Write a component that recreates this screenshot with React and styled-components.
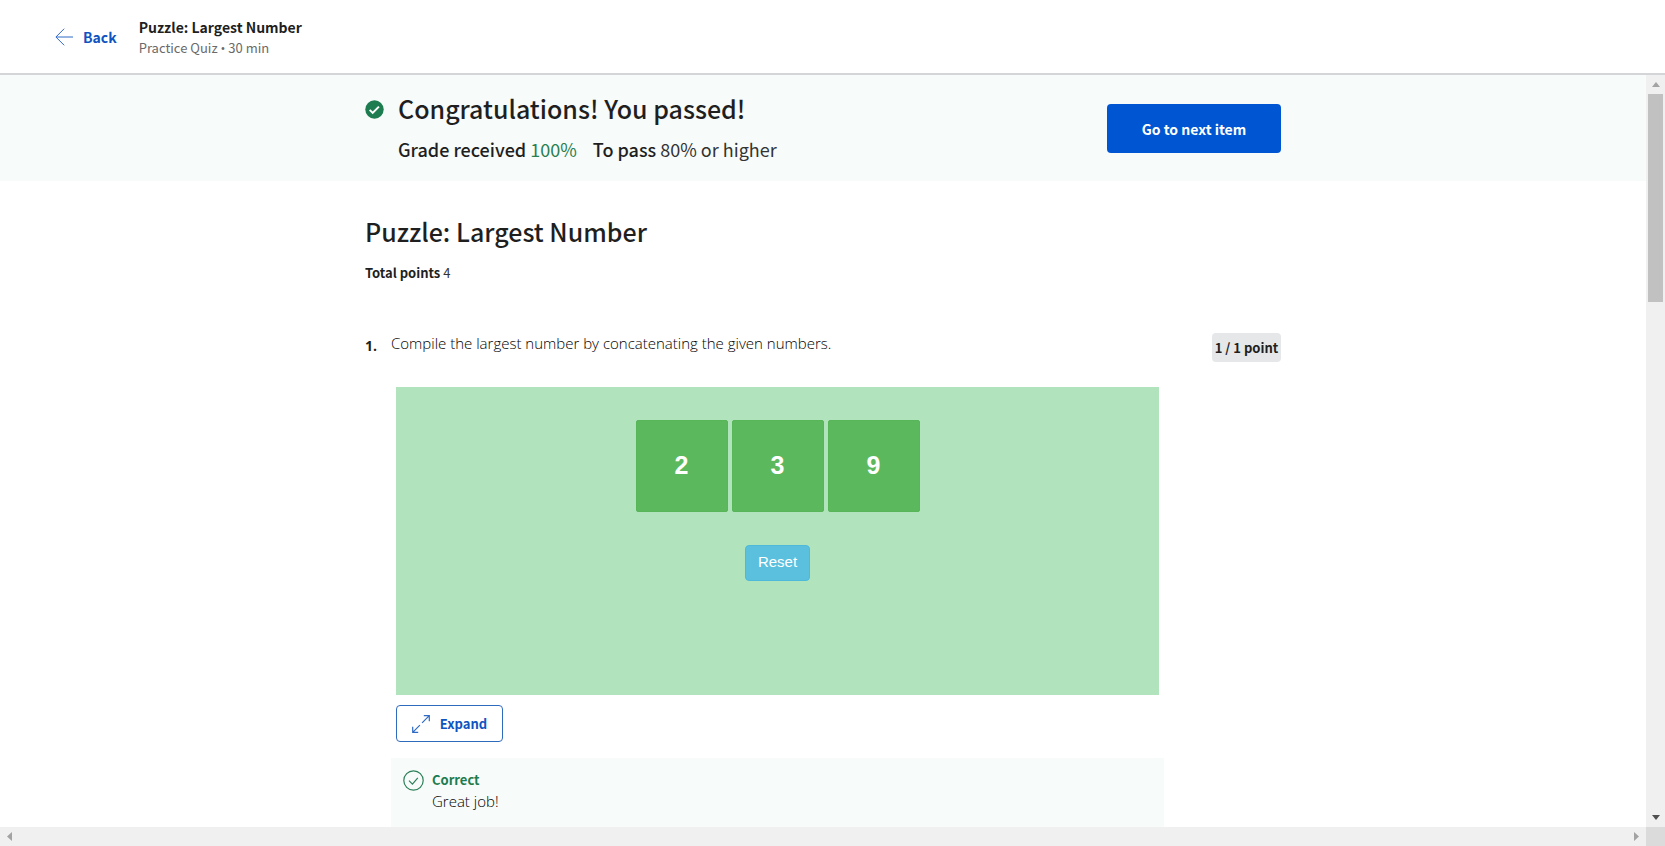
import React from "react";
import styled, { createGlobalStyle } from "styled-components";

const GlobalStyle = createGlobalStyle`
  *, *::before, *::after { box-sizing: border-box; }
  body { margin: 0; background: #fff; color: #1f1f1f; font-family: "Source Sans Pro", "Noto Sans CJK SC", sans-serif; }
  h1, h2, p { margin: 0; }
  button { font-family: inherit; cursor: pointer; }
`;

const Page = styled.div`
  display: grid;
  grid-template-rows: auto minmax(0, 1fr) 19px;
  height: 100vh;
`;

const Header = styled.header`
  display: flex;
  align-items: center;
  gap: 22px;
  height: 75px;
  padding: 0 55px;
  border-bottom: 2px solid #d3d5d6;
`;

const BackLink = styled.a`
  display: flex;
  align-items: center;
  gap: 10px;
  color: #0f54c0;
  font-size: 14px;
  font-weight: 700;
  line-height: 20px;
  text-decoration: none;
`;

const HeaderTitle = styled.p`
  font-size: 14px;
  font-weight: 700;
  line-height: 22px;
`;

const HeaderMeta = styled.p`
  color: #6a6a6a;
  font-size: 13px;
  line-height: 20px;
`;

const Bullet = styled.span`
  font-family: "Open Sans", sans-serif;
`;

const Body = styled.div`
  display: grid;
  grid-template-columns: minmax(0, 1fr) 19px;
  min-height: 0;
`;

const Scroller = styled.main`
  overflow: hidden;
`;

const Banner = styled.section`
  background: #f7fbfa;
`;

const Container = styled.div`
  width: 100%;
  max-width: 916px;
  margin: 0 auto;
`;

const BannerRow = styled(Container)`
  display: flex;
  align-items: flex-start;
  gap: 14px;
  padding: 13px 0 17px;
`;

const BannerIcon = styled.span`
  display: flex;
  padding-top: 12px;
`;

const BannerText = styled.div`
  flex: 1;
`;

const BigTitle = styled.h1`
  font-size: 25px;
  font-weight: 500;
  line-height: 40px;
`;

const GradeLine = styled.p`
  display: flex;
  gap: 16px;
  padding-top: 6px;
  font-size: 18px;
  line-height: 30px;
  color: #333;

  b { font-weight: 500; color: #1f1f1f; }
  em { font-style: normal; color: #2a7f4f; }
`;

const PrimaryButton = styled.button`
  height: 49px;
  width: 174px;
  margin-top: 16px;
  border: 0;
  border-radius: 4px;
  background: #0056d2;
  color: #fff;
  font-size: 14px;
  font-weight: 700;
  line-height: 20px;
`;

const QuizTop = styled.div`
  padding: 30px 0 49px;
`;

const TotalPoints = styled.p`
  padding-top: 11px;
  font-size: 13px;
  line-height: 22px;
  color: #333;

  b { font-weight: 700; color: #1f1f1f; }
`;

const Question = styled.div`
  display: grid;
  grid-template-columns: 26px minmax(0, 1fr) 69px;
`;

const QuestionNumber = styled.span`
  padding-top: 3px;
  font-family: "Open Sans", sans-serif;
  font-size: 14px;
  font-weight: 700;
  line-height: 20px;
`;

const Content = styled.div`
  padding-right: 48px;
`;

const Prompt = styled.p`
  font-family: "Open Sans", sans-serif;
  font-size: 15px;
  font-weight: 300;
  line-height: 20px;
  color: #000;
`;

const Badge = styled.span`
  height: 29px;
  border-radius: 4px;
  background: #e5e7e8;
  font-size: 13px;
  font-weight: 700;
  line-height: 29px;
  text-align: center;
`;

const Indent = styled.div`
  padding: 34px 5px 16px;
`;

const Board = styled.div`
  display: flex;
  flex-direction: column;
  align-items: center;
  gap: 33px;
  height: 308px;
  padding-top: 33px;
  background: #b1e4bd;
`;

const Tiles = styled.div`
  display: flex;
  gap: 4px;
`;

const Tile = styled.button`
  width: 92px;
  height: 92px;
  padding: 0 0 2px;
  border: 1px solid #58b558;
  border-radius: 2px;
  background: #5cb85c;
  color: #fff;
  font-family: "Liberation Sans", Arial, sans-serif;
  font-size: 25px;
  font-weight: 700;
`;

const ResetButton = styled.button`
  width: 65px;
  height: 36px;
  padding: 0 0 4px;
  border: 1px solid #4fb9d9;
  border-radius: 4px;
  background: #5bc0de;
  color: #fff;
  font-family: "Liberation Sans", Arial, sans-serif;
  font-size: 15px;
`;

const ExpandButton = styled.button`
  display: flex;
  align-items: center;
  justify-content: center;
  gap: 10px;
  width: 107px;
  height: 37px;
  margin-top: 10px;
  padding: 0;
  border: 1px solid #2f6bbd;
  border-radius: 4px;
  background: #fff;
  color: #0f54c0;
  font-size: 13px;
  font-weight: 700;
  line-height: 20px;
`;

const Feedback = styled.div`
  display: flex;
  gap: 8px;
  min-height: 90px;
  padding: 12px;
  background: #f7fbfa;
`;

const FeedbackTitle = styled.p`
  color: #1d7c50;
  font-size: 13px;
  font-weight: 700;
  line-height: 20px;
`;

const FeedbackText = styled.p`
  font-family: "Open Sans", sans-serif;
  font-size: 15px;
  font-weight: 300;
  line-height: 22px;
  color: #000;
`;

const VerticalTrack = styled.div`
  display: flex;
  flex-direction: column;
  align-items: center;
  background: #f0f0f0;
`;

const ArrowBox = styled.span`
  display: flex;
  align-items: center;
  justify-content: center;
  width: 19px;
  height: 19px;
`;

const VerticalThumb = styled.div`
  flex: none;
  width: 15px;
  height: 208px;
  margin-bottom: auto;
  background: #c1c1c1;
`;

const HorizontalBar = styled.div`
  display: flex;
  background: #f0f0f0;
`;

const Spacer = styled.span`
  flex: 1;
`;

const Corner = styled.span`
  width: 19px;
  background: #dbdbdb;
`;

const arrowPaths = {
  up: "M0 5 4 0 8 5Z",
  down: "M0 0 8 0 4 5Z",
  left: "M5 0 5 9 0 4.5Z",
  right: "M0 0 0 9 5 4.5Z",
};

function ScrollArrow({ dir, color = "#a3a3a3" }) {
  return (
    <ArrowBox>
      <svg width="8" height="9" viewBox={dir === "up" || dir === "down" ? "0 -2 8 9" : "-1 0 8 9"} fill={color} aria-hidden="true">
        <path d={arrowPaths[dir]} />
      </svg>
    </ArrowBox>
  );
}

export default function App() {
  return (
    <Page>
      <GlobalStyle />
      <Header>
        <BackLink href="#back">
          <svg width="18" height="18" viewBox="0 0 18 18" fill="none" stroke="#2f6bc4" aria-hidden="true">
            <path d="M9.2 .7.9 9 9.2 17.3M1 9h17" />
          </svg>
          Back
        </BackLink>
        <div>
          <HeaderTitle>Puzzle: Largest Number</HeaderTitle>
          <HeaderMeta>Practice Quiz <Bullet>•</Bullet> 30 min</HeaderMeta>
        </div>
      </Header>
      <Body>
        <Scroller>
          <Banner>
            <BannerRow>
              <BannerIcon>
                <svg width="19" height="19" viewBox="0 0 19 19" aria-hidden="true">
                  <circle cx="9.5" cy="9.5" r="9.2" fill="#1d7c50" />
                  <path d="m4.7 9.9 3 3 6.2-6.3" fill="none" stroke="#fff" strokeWidth="2" />
                </svg>
              </BannerIcon>
              <BannerText>
                <BigTitle>Congratulations! You passed!</BigTitle>
                <GradeLine>
                  <span><b>Grade received</b> <em>100%</em></span>
                  <span><b>To pass</b> 80% or higher</span>
                </GradeLine>
              </BannerText>
              <PrimaryButton type="button">Go to next item</PrimaryButton>
            </BannerRow>
          </Banner>
          <Container>
            <QuizTop>
              <BigTitle as="h2">Puzzle: Largest Number</BigTitle>
              <TotalPoints><b>Total points</b> 4</TotalPoints>
            </QuizTop>
            <Question>
              <QuestionNumber>1.</QuestionNumber>
              <Content>
                <Prompt>Compile the largest number by concatenating the given numbers.</Prompt>
                <Indent>
                  <Board>
                    <Tiles>
                      {[2, 3, 9].map((n) => <Tile type="button" key={n}>{n}</Tile>)}
                    </Tiles>
                    <ResetButton type="button">Reset</ResetButton>
                  </Board>
                  <ExpandButton type="button">
                    <svg width="18" height="18" viewBox="0 0 18 18" fill="none" stroke="#2f6bc4" strokeWidth="1.2" aria-hidden="true">
                      <path d="M11.8.7h5.5v5.5M17.3.7l-7.2 7.2M.7 11.8v5.5h5.5M.7 17.3l7.2-7.2" />
                    </svg>
                    Expand
                  </ExpandButton>
                </Indent>
                <Feedback>
                  <svg width="21" height="21" viewBox="0 0 21 21" fill="none" stroke="#2c8059" strokeWidth="1.2" aria-hidden="true">
                    <circle cx="10.5" cy="10.5" r="9.7" />
                    <path d="m6 10.6 3.4 3.5 5.4-6.3" />
                  </svg>
                  <div>
                    <FeedbackTitle>Correct</FeedbackTitle>
                    <FeedbackText>Great job!</FeedbackText>
                  </div>
                </Feedback>
              </Content>
              <Badge>1 / 1 point</Badge>
            </Question>
          </Container>
        </Scroller>
        <VerticalTrack>
          <ScrollArrow dir="up" />
          <VerticalThumb />
          <ScrollArrow dir="down" color="#505050" />
        </VerticalTrack>
      </Body>
      <HorizontalBar>
        <ScrollArrow dir="left" />
        <Spacer />
        <ScrollArrow dir="right" />
        <Corner />
      </HorizontalBar>
    </Page>
  );
}
